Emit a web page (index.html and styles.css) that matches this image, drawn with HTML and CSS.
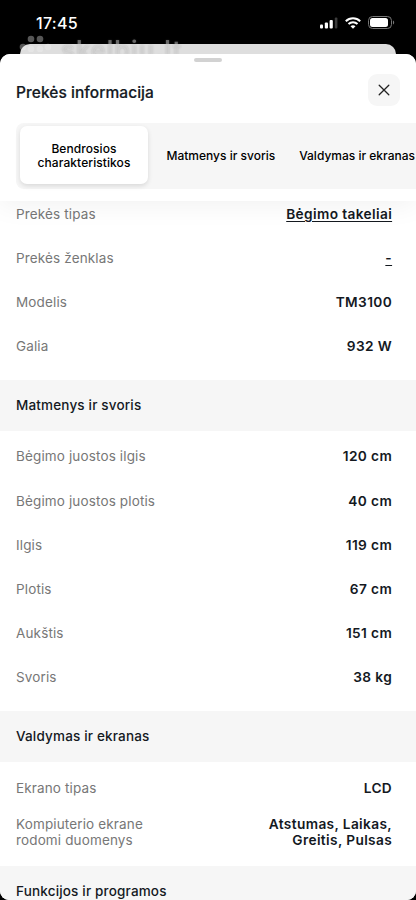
FILE: index.html
```html
<!DOCTYPE html>
<html lang="lt">
<head>
<meta charset="utf-8">
<title>Prekės informacija</title>
<link rel="stylesheet" href="styles.css">
</head>
<body>
<div class="phone">
  <div class="status">
    <span class="time">17:45</span>
    <div class="status-icons">
      <svg class="signal" width="18" height="12" viewBox="0 0 18 12" fill="#fff"><rect x="0" y="7.5" width="3" height="4" rx="1"/><rect x="4.8" y="5.5" width="3.2" height="6" rx="1"/><rect x="9.6" y="3" width="3.2" height="8.5" rx="1"/><rect x="14.8" y=".5" width="2.6" height="11" rx="1" fill="#3c3c3c"/></svg>
      <svg class="wifi" width="16" height="12" viewBox="0 0 16 12" fill="none" stroke="#fff" stroke-width="2"><path d="M.8 4.2a10.4 10.4 0 0 1 14.4 0M3.5 7a6.500 6.500 0 0 1 9 0"/><path d="M8 11.8 5.5 9.3a3.7 3.7 0 0 1 5 0Z" fill="#fff" stroke="none"/></svg>
      <svg class="battery" width="27" height="13" viewBox="0 0 27 13"><rect x=".5" y=".5" width="23" height="12" rx="4" fill="none" stroke="#777"/><rect x="2" y="2" width="18" height="9" rx="2.5" fill="#fff"/><path d="M25 4.5c1.6.5 1.6 3.5 0 4Z" fill="#777"/></svg>
    </div>
  </div>
  <div class="back-sheet"></div>
  <main class="sheet">
    <header class="top">
      <div class="handle"></div>
      <div class="title-row">
        <h1>Prekės informacija</h1>
        <button class="close" aria-label="Uždaryti"><svg width="12" height="12" viewBox="0 0 12 12" fill="none" stroke="#222" stroke-width="1.3" stroke-linecap="round"><path d="M1.2 1.2l9.6 9.6M10.8 1.2l-9.6 9.6"/></svg></button>
      </div>
      <nav class="tabs">
        <span class="tab active">Bendrosios<br>charakteristikos</span>
        <span class="tab second">Matmenys ir svoris</span>
        <span class="tab third">Valdymas ir ekranas</span>
      </nav>
    </header>
    <div class="content">
      <dl class="first">
        <div class="row"><dt>Prekės tipas</dt><dd><u>Bėgimo takeliai</u></dd></div>
        <div class="row"><dt>Prekės ženklas</dt><dd><u>-</u></dd></div>
        <div class="row"><dt>Modelis</dt><dd>TM3100</dd></div>
        <div class="row"><dt>Galia</dt><dd>932 W</dd></div>
      </dl>
      <h2>Matmenys ir svoris</h2>
      <dl>
        <div class="row"><dt>Bėgimo juostos ilgis</dt><dd>120 cm</dd></div>
        <div class="row"><dt>Bėgimo juostos plotis</dt><dd>40 cm</dd></div>
        <div class="row"><dt>Ilgis</dt><dd>119 cm</dd></div>
        <div class="row"><dt>Plotis</dt><dd>67 cm</dd></div>
        <div class="row"><dt>Aukštis</dt><dd>151 cm</dd></div>
        <div class="row"><dt>Svoris</dt><dd>38 kg</dd></div>
      </dl>
      <h2>Valdymas ir ekranas</h2>
      <dl>
        <div class="row"><dt>Ekrano tipas</dt><dd>LCD</dd></div>
        <div class="row"><dt>Kompiuterio ekrane<br>rodomi duomenys</dt><dd>Atstumas, Laikas,<br>Greitis, Pulsas</dd></div>
      </dl>
      <h2>Funkcijos ir programos</h2>
    </div>
  </main>
  <div class="watermark">
    <svg width="34" height="24" viewBox="0 0 34 24" fill="currentColor"><circle cx="13" cy="4" r="3.3"/><circle cx="22" cy="4" r="3.3"/><circle cx="5" cy="12" r="3.3"/><circle cx="13" cy="14" r="3.3"/><circle cx="22" cy="14" r="3.3"/><circle cx="30" cy="12" r="3.3"/></svg>
    <span>skelbiu.lt</span>
  </div>
</div>
</body>
</html>
```
FILE: styles.css
```css
* { box-sizing: border-box; }
body { margin: 0; background: #000; font-family: Inter, "Liberation Sans", sans-serif; color: #14191f; }
h1, h2, dl, dt, dd { margin: 0; }
.phone { position: relative; width: 416px; height: 900px; overflow: hidden; background: #000; display: flex; flex-direction: column; }
.status { height: 44px; flex: none; display: flex; justify-content: space-between; padding: 14px 21px 0 36px; color: #fff; }
.time { font-size: 16px; line-height: 18px; font-weight: 500; letter-spacing: .3px; }
.status-icons { display: flex; align-items: flex-start; padding-top: 2px; }
.signal { margin-top: 1px; margin-right: 7px; }
.wifi { margin-top: 1px; margin-right: 7px; }
.back-sheet { height: 20px; flex: none; margin: 0 20px -10px; border-radius: 10px 10px 0 0; background: #dedede; }
.sheet { position: relative; flex: 1; min-height: 0; background: #fff; border-radius: 10px 10px 9px 9px; overflow: hidden; display: flex; flex-direction: column; }
.top { position: relative; z-index: 1; height: 147px; flex: none; background: #fff; box-shadow: 0 4px 26px rgba(0, 0, 0, .06); }
.handle { width: 28px; height: 4px; margin: 0 auto; transform: translateY(4px); border-radius: 2px; background: #d2d2d2; }
.title-row { height: 65px; padding: 0 16px 2px; display: flex; justify-content: space-between; align-items: center; }
h1 { padding-top: 6px; font-size: 15.500px; line-height: 20px; font-weight: 500; letter-spacing: .05px; -webkit-text-stroke: .2px currentColor; }
.close { width: 32px; height: 32px; padding: 0; border: 0; border-radius: 9px; background: #f6f6f6; display: flex; align-items: center; justify-content: center; }
.tabs { height: 66px; margin-left: 16px; padding: 3px 0 5px 4px; background: #f6f6f6; border-radius: 8px 0 0 8px; display: flex; }
.tab { flex: none; display: flex; align-items: center; justify-content: center; text-align: center; white-space: nowrap; padding-top: 2px; font-size: 12px; line-height: 14px; font-weight: 500; color: #000; }
.active { width: 128px; border-radius: 7px; background: #fff; box-shadow: 0 2px 5px rgba(0, 0, 0, .12); letter-spacing: .08px; }
.second { margin-left: 18.500px; }
.third { margin-left: 24px; }
.content { flex: none; }
dl { padding: 4px 0 11.800px; }
.first { margin-top: -13.200px; padding-top: 4px; }
.row { height: 44.150px; padding: 0 24px 0 16px; display: flex; justify-content: space-between; align-items: center; font-size: 13.500px; line-height: 16.500px; }
dt { color: #777; letter-spacing: .14px; }
dd { font-size: 13.700px; font-weight: 600; text-align: right; letter-spacing: .37px; margin-right: -.1px; }
u { text-decoration-thickness: 1px; text-underline-offset: 2px; }
h2 { height: 50.500px; padding: 0 16px 1px; display: flex; align-items: center; background: #f6f6f6; font-size: 13.500px; letter-spacing: .17px; font-weight: 500; }
.watermark { position: absolute; left: 18px; top: 35px; display: flex; gap: 9px; color: rgba(240, 240, 240, .36); font-size: 25px; line-height: 31px; font-weight: 600; letter-spacing: 1.150px; text-shadow: 0 0 2px rgba(110, 110, 110, .35); -webkit-mask-image: linear-gradient(#000 55%, transparent 95%); mask-image: linear-gradient(#000 55%, transparent 95%); }
```
